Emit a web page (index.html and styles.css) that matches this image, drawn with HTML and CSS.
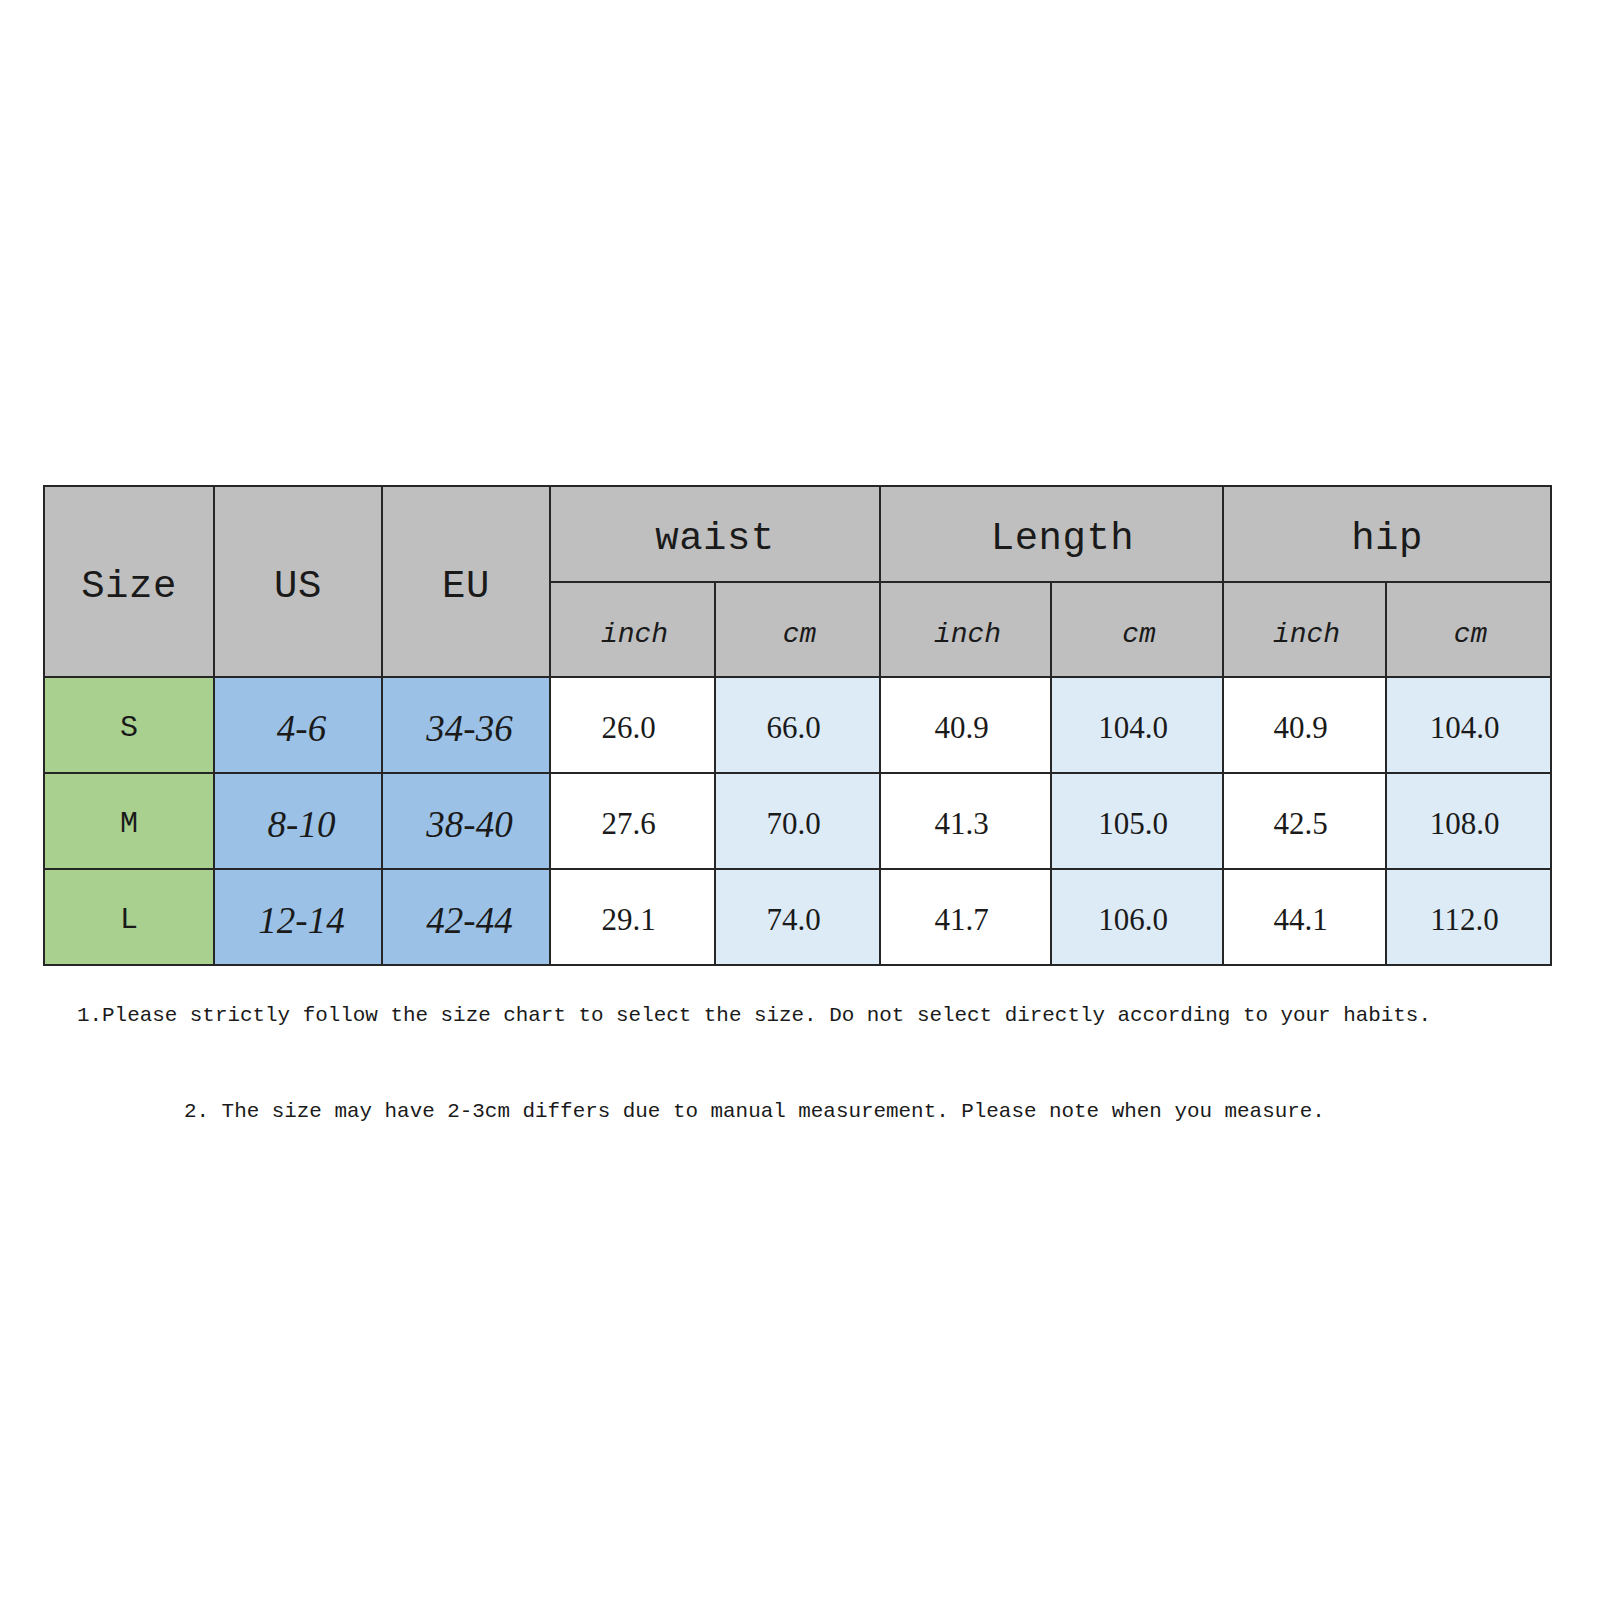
FILE: index.html
```html
<!DOCTYPE html>
<html>
<head>
<meta charset="utf-8">
<link rel="stylesheet" href="styles.css">
</head>
<body>
<div class="page">
  <table class="chart">
    <colgroup>
      <col class="c1"><col class="c2"><col class="c3"><col class="c4"><col class="c5"><col class="c6"><col class="c7"><col class="c8"><col class="c9">
    </colgroup>
    <tr class="h1">
      <th rowspan="2" class="big">Size</th>
      <th rowspan="2" class="big">US</th>
      <th rowspan="2" class="big">EU</th>
      <th colspan="2" class="big">waist</th>
      <th colspan="2" class="big shift">Length</th>
      <th colspan="2" class="big">hip</th>
    </tr>
    <tr class="h2">
      <th class="unit">inch</th><th class="unit">cm</th>
      <th class="unit">inch</th><th class="unit">cm</th>
      <th class="unit">inch</th><th class="unit">cm</th>
    </tr>
    <tr class="row">
      <td class="size">S</td><td class="reg">4-6</td><td class="reg">34-36</td>
      <td class="num">26.0</td><td class="num lb">66.0</td>
      <td class="num">40.9</td><td class="num lb">104.0</td>
      <td class="num">40.9</td><td class="num lb">104.0</td>
    </tr>
    <tr class="row">
      <td class="size">M</td><td class="reg">8-10</td><td class="reg">38-40</td>
      <td class="num">27.6</td><td class="num lb">70.0</td>
      <td class="num">41.3</td><td class="num lb">105.0</td>
      <td class="num">42.5</td><td class="num lb">108.0</td>
    </tr>
    <tr class="row">
      <td class="size">L</td><td class="reg">12-14</td><td class="reg">42-44</td>
      <td class="num">29.1</td><td class="num lb">74.0</td>
      <td class="num">41.7</td><td class="num lb">106.0</td>
      <td class="num">44.1</td><td class="num lb">112.0</td>
    </tr>
  </table>
  <div class="notes">
    <p class="note n1">1.Please strictly follow the size chart to select the size. Do not select directly according to your habits.</p>
    <p class="note n2">2. The size may have 2-3cm differs due to manual measurement. Please note when you measure.</p>
  </div>
</div>
</body>
</html>
```
FILE: styles.css
```css
html, body {
  margin: 0;
  padding: 0;
  background: #ffffff;
}
.page {
  width: 1600px;
  height: 1600px;
  padding: 485px 0 0 43px;
  box-sizing: border-box;
}
.chart {
  border-collapse: collapse;
  table-layout: fixed;
  width: 1508px;
  color: #1a1a1a;
}
.chart th, .chart td {
  border: 2px solid #262626;
  padding: 0;
  text-align: center;
  vertical-align: middle;
}
.c1 { width: 170px; }
.c2 { width: 168px; }
.c3 { width: 168px; }
.c4 { width: 165px; }
.c5 { width: 165px; }
.c6 { width: 171px; }
.c7 { width: 172px; }
.c8 { width: 163px; }
.c9 { width: 165px; }
.h1 { height: 96px; }
.h2 { height: 95px; }
.row { height: 96px; }
.chart th {
  background: #bfbfbf;
  font-weight: normal;
}
.chart .big {
  font-family: "Liberation Mono", "DejaVu Sans Mono", monospace;
  font-size: 39px;
  letter-spacing: 0.5px;
  padding-top: 10px;
}
.chart .big.shift {
  padding-left: 22px;
}
.chart .unit {
  font-family: "Liberation Mono", "DejaVu Sans Mono", monospace;
  font-style: italic;
  font-size: 28px;
  padding-top: 10px;
  padding-left: 4px;
}
.chart .size {
  background: #a9d08e;
  font-family: "Liberation Mono", "DejaVu Sans Mono", monospace;
  font-size: 30px;
  padding-top: 5px;
}
.chart .reg {
  background: #9bc2e6;
  font-family: "Liberation Serif", "Times New Roman", serif;
  font-style: italic;
  font-size: 37px;
  padding-top: 6px;
  padding-left: 7px;
}
.chart .num {
  background: #ffffff;
  font-family: "Liberation Serif", "Times New Roman", serif;
  font-size: 31px;
  padding-top: 5px;
  padding-right: 8px;
}
.chart .num.lb {
  background: #ddebf7;
}
.notes {
  padding-top: 35px;
}
.note {
  margin: 0;
  font-family: "Liberation Mono", "DejaVu Sans Mono", monospace;
  font-size: 20.9px;
  line-height: 30px;
  color: #1a1a1a;
  white-space: nowrap;
}
.n1 {
  padding-left: 34px;
}
.n2 {
  margin-top: 66px;
  padding-left: 141px;
}
```
